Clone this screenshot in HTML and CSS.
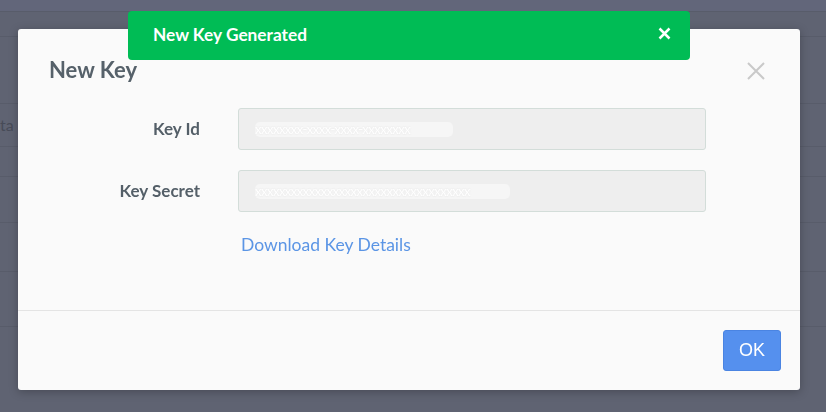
FILE: index.html
```html
<!DOCTYPE html>
<html>
<head>
<meta charset="utf-8">
<link rel="stylesheet" href="styles.css">
</head>
<body>
<div class="page">
  <div class="row r1"></div>
  <div class="row r2"></div>
  <div class="row r3"></div>
  <div class="row r4"><span class="ghost">ta is</span></div>
  <div class="row r5"></div>
  <div class="row r6"></div>
  <div class="row r7"></div>
  <div class="row r8"></div>
</div>
<div class="overlay">
  <div class="modal">
    <div class="modal-body">
      <div class="modal-header">
        <h2 class="title">New Key</h2>
        <button class="close" aria-label="Close">
          <svg width="18" height="18" viewBox="0 0 18 18"><path d="M1 1 L17 17 M17 1 L1 17" stroke="#c9c9c9" stroke-width="2" fill="none"/></svg>
        </button>
      </div>
      <div class="form">
        <label class="label">Key Id</label>
        <div class="input"><span class="blur b1">xxxxxxxx-xxxx-xxxx-xxxxxxxx</span></div>
        <label class="label">Key Secret</label>
        <div class="input"><span class="blur b2">xxxxxxxxxxxxxxxxxxxxxxxxxxxxxxxxxxxx</span></div>
        <div></div>
        <a class="link" href="#">Download Key Details</a>
      </div>
    </div>
    <div class="modal-footer">
      <button class="ok">OK</button>
    </div>
  </div>
  <div class="toast">
    <span class="toast-text">New Key Generated</span>
    <svg class="toast-x" width="13" height="13" viewBox="0 0 13 13"><path d="M1.5 1.5 L11.5 11.5 M11.5 1.5 L1.5 11.5" stroke="#ffffff" stroke-width="2.5" fill="none"/></svg>
  </div>
</div>
</body>
</html>
```

FILE: styles.css
```css
* { box-sizing: border-box; }
html, body { margin: 0; padding: 0; }
body {
  width: 826px;
  height: 412px;
  overflow: hidden;
  background: #5f6372;
  font-family: Lato, "Open Sans", sans-serif;
}
.page { display: flex; flex-direction: column; }
.row { border-bottom: 1px solid #585c6a; }
.r1 { height: 12px; background: #62667a; }
.r2 { height: 25px; }
.r3 { height: 67px; }
.r4 { height: 43px; padding-top: 11px; }
.r5 { height: 30px; }
.r6 { height: 46px; }
.r7 { height: 49px; }
.r8 { height: 55px; }
.ghost {
  display: block;
  color: #474b58;
  font-size: 16px;
  white-space: nowrap;
}
.overlay {
  position: fixed;
  inset: 0;
}
.modal {
  margin: 29px 0 0 18px;
  width: 782px;
  height: 361px;
  background: #fafafa;
  border-radius: 3px;
  box-shadow: 0 2px 10px rgba(0,0,0,0.25);
  display: flex;
  flex-direction: column;
}
.modal-body { flex: 1; }
.modal-header {
  display: flex;
  justify-content: space-between;
  align-items: center;
  padding: 28px 35px 0 31px;
}
.title {
  margin: 0;
  font-size: 22px;
  line-height: 26px;
  font-weight: 700;
  color: #56616a;
}
.close {
  border: 0;
  background: none;
  padding: 0;
  width: 18px;
  height: 18px;
  margin-top: 2px;
}
.close svg { display: block; }
.form {
  display: grid;
  grid-template-columns: 182px 468px;
  column-gap: 38px;
  row-gap: 20px;
  margin-top: 25px;
  align-items: center;
}
.label {
  text-align: right;
  font-size: 17px;
  font-weight: 700;
  color: #545f68;
  margin-top: -2px;
}
.input {
  height: 42px;
  background: #eeeeee;
  border: 1px solid #d3ddd9;
  border-radius: 3px;
  display: flex;
  align-items: center;
  padding-left: 16px;
}
.blur {
  color: #ffffff;
  font-size: 13px;
  letter-spacing: -0.5px;
  white-space: nowrap;
  overflow: hidden;
  text-shadow: 0 0 2px #d6d6d6, 1px 0 1px #ffffff, -1px 0 1px #ffffff;
  background: #f6f6f6;
  border-radius: 5px;
  line-height: 15px;
}
.b1 { width: 198px; }
.b2 { width: 255px; }
.link {
  margin-top: 1px;
  padding-left: 3px;
  font-size: 17.5px;
  line-height: 24px;
  color: #5b95e5;
  text-decoration: none;
}
.modal-footer {
  height: 80px;
  border-top: 1px solid #e4e4e4;
  padding: 19px;
  display: flex;
  justify-content: flex-end;
}
.ok {
  width: 58px;
  height: 41px;
  background: #5590ee;
  border: 1px solid #4a84e2;
  border-radius: 3px;
  color: #ffffff;
  font-family: "Liberation Sans", Arial, sans-serif;
  font-size: 18px;
  padding: 0;
}
.toast {
  position: absolute;
  left: 128px;
  top: 11px;
  width: 562px;
  height: 49px;
  background: #00bc55;
  border-radius: 4px;
  display: flex;
  align-items: center;
  justify-content: space-between;
  padding: 0 19px 0 25px;
}
.toast-text {
  color: #ffffff;
  font-size: 17.3px;
  font-weight: 700;
  margin-top: -2px;
}
.toast-x { display: block; margin-top: -4px; }
```
